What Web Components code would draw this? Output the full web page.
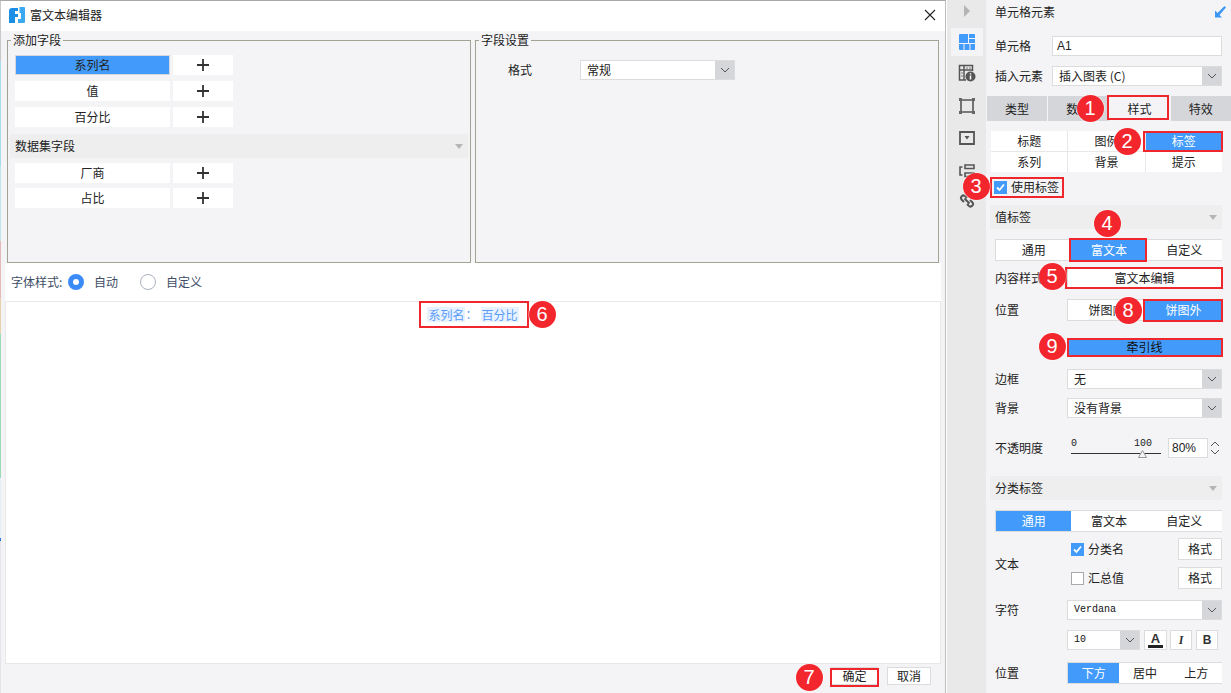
<!DOCTYPE html>
<html lang="zh"><head><meta charset="utf-8"><title>富文本编辑器</title>
<style>
html,body{margin:0;padding:0;width:1231px;height:693px;overflow:hidden;background:#fff}
body{font:12px/18px "Noto Sans CJK SC","Noto Sans",sans-serif;color:#222}
</style></head><body>
<rt-app>
  <rt-dialog heading="富文本编辑器">
    <rt-fieldset slot="left" legend="添加字段" style="width:464px">
      <rt-field selected label="系列名" style="margin-top:6px"></rt-field>
      <rt-field label="值" style="margin-top:6px"></rt-field>
      <rt-field label="百分比" style="margin-top:6px"></rt-field>
      <rt-collapse heading="数据集字段" style="margin:7px 2px 0;height:24px"></rt-collapse>
      <rt-field label="厂商" style="margin-top:5px"></rt-field>
      <rt-field label="占比" style="margin-top:5px"></rt-field>
    </rt-fieldset>
    <rt-fieldset slot="right" legend="字段设置" style="width:464px">
      <rt-row label="格式" lw="72" style="margin:11px 0 0 32px;height:20px">
        <rt-select value="常规" style="width:155px"></rt-select>
      </rt-row>
    </rt-fieldset>
    <rt-radios slot="radios" heading="字体样式:"></rt-radios>
    <rt-editor slot="editor">
      <rt-chip>系列名</rt-chip><span style="color:#5a9cf8;margin-right:3px">：</span><rt-chip>百分比</rt-chip>
    </rt-editor>
    <rt-btn slot="footer" style="width:47px;height:18px;margin-right:9px">确定</rt-btn>
    <rt-btn slot="footer" style="width:44px;height:18px">取消</rt-btn>
  </rt-dialog>
  <rt-rail></rt-rail>
  <rt-panel heading="单元格元素">
    <rt-row label="单元格" lw="57" style="margin:11px 9px 0;height:20px"><rt-input style="flex:1">A1</rt-input></rt-row>
    <rt-row label="插入元素" lw="57" style="margin:10px 9px 0;height:20px"><rt-select value="插入图表 (C)" style="flex:1"></rt-select></rt-row>
    <rt-tabs items="类型,数据,样式,特效" active="2" style="margin-top:10px"></rt-tabs>
    <rt-subtabs items="标题,图例,标签,系列,背景,提示" active="2" style="margin:10px 9px 0 5px"></rt-subtabs>
    <rt-check checked style="margin:6px 0 0 8px;height:18px">使用标签</rt-check>
    <rt-collapse heading="值标签" style="margin:9px 9px 0 4px;height:24px"></rt-collapse>
    <rt-seg items="通用,富文本,自定义" active="1" style="margin:10px 9px 0;height:22px"></rt-seg>
    <rt-row label="内容样式" lw="72" style="margin:6px 9px 0;height:22px"><rt-btn style="flex:1;height:22px">富文本编辑</rt-btn></rt-row>
    <rt-row label="位置" lw="72" style="margin:10px 9px 0;height:22px"><rt-seg items="饼图内,饼图外" active="1" style="flex:1;height:22px"></rt-seg></rt-row>
    <rt-row lw="72" style="margin:17px 9px 0;height:18px"><rt-btn primary style="flex:1;height:18px">牵引线</rt-btn></rt-row>
    <rt-row label="边框" lw="72" style="margin:13px 9px 0;height:20px"><rt-select value="无" style="flex:1"></rt-select></rt-row>
    <rt-row label="背景" lw="72" style="margin:9px 9px 0;height:20px"><rt-select value="没有背景" style="flex:1"></rt-select></rt-row>
    <rt-row label="不透明度" lw="76" style="margin:20px 9px 0;height:20px"><rt-slider style="width:90px;margin-right:7px"></rt-slider><rt-num style="flex:1">80%</rt-num></rt-row>
    <rt-collapse heading="分类标签" style="margin:18px 9px 0 4px;height:24px"></rt-collapse>
    <rt-seg items="通用,富文本,自定义" active="0" style="margin:10px 9px 0;height:22px"></rt-seg>
    <rt-row label="文本" lw="76" style="margin:6px 9px 0;height:51px">
      <rt-stack style="flex:1">
        <rt-row style="height:22px"><rt-check checked style="flex:1">分类名</rt-check><rt-btn style="width:44px;height:22px">格式</rt-btn></rt-row>
        <rt-row style="height:22px;margin-top:7px"><rt-check style="flex:1">汇总值</rt-check><rt-btn style="width:44px;height:22px">格式</rt-btn></rt-row>
      </rt-stack>
    </rt-row>
    <rt-row label="字符" lw="72" style="margin:11px 9px 0;height:20px"><rt-select mono value="Verdana" style="flex:1"></rt-select></rt-row>
    <rt-row lw="72" style="margin:10px 9px 0;height:20px">
      <rt-select mono value="10" style="width:73px;margin-right:4px"></rt-select>
      <rt-tool kind="a" style="margin-right:3px;width:23px"></rt-tool><rt-tool kind="i" style="margin-right:4px"></rt-tool><rt-tool kind="b"></rt-tool>
    </rt-row>
    <rt-row label="位置" lw="72" style="margin:12px 9px 0;height:22px"><rt-seg items="下方,居中,上方" active="0" style="flex:1;height:22px"></rt-seg></rt-row>
  </rt-panel>

  <rt-mark slot="over" style="--x:1107px;--y:95px;--w:62px;--h:25px"></rt-mark>
  <rt-mark slot="over" style="--x:1143px;--y:131px;--w:80px;--h:21px"></rt-mark>
  <rt-mark slot="over" style="--x:990px;--y:177px;--w:74px;--h:21px"></rt-mark>
  <rt-mark slot="over" style="--x:1069px;--y:238px;--w:78px;--h:24px"></rt-mark>
  <rt-mark slot="over" style="--x:1065px;--y:267px;--w:158px;--h:22px"></rt-mark>
  <rt-mark slot="over" style="--x:1143px;--y:299px;--w:80px;--h:23px"></rt-mark>
  <rt-mark slot="over" style="--x:1067px;--y:338px;--w:156px;--h:19px"></rt-mark>
  <rt-mark slot="over" style="--x:419px;--y:301px;--w:110px;--h:27px"></rt-mark>
  <rt-mark slot="over" style="--x:830px;--y:668px;--w:49px;--h:19px"></rt-mark>

  <rt-badge slot="over" style="--x:1090px;--y:108px">1</rt-badge>
  <rt-badge slot="over" style="--x:1127px;--y:141px">2</rt-badge>
  <rt-badge slot="over" style="--x:976px;--y:186px">3</rt-badge>
  <rt-badge slot="over" style="--x:1107px;--y:223px">4</rt-badge>
  <rt-badge slot="over" style="--x:1052px;--y:276px">5</rt-badge>
  <rt-badge slot="over" style="--x:542px;--y:314px">6</rt-badge>
  <rt-badge slot="over" style="--x:809px;--y:677px">7</rt-badge>
  <rt-badge slot="over" style="--x:1128px;--y:310px">8</rt-badge>
  <rt-badge slot="over" style="--x:1052px;--y:346px">9</rt-badge>
</rt-app>
<script>
const BLUE='#429bfb', CHEV='<svg width="10" height="6" viewBox="0 0 10 6"><path d="M1 1l4 4 4-4" fill="none" stroke="#555" stroke-width="1"/></svg>';
function def(name, css, render){
  customElements.define(name, class extends HTMLElement{
    connectedCallback(){
      if(this.shadowRoot) return;
      const r=this.attachShadow({mode:'open'});
      r.innerHTML='<style>'+css+'</style>'+render(this);
    }
  });
}
const a=(e,n,d='')=>e.hasAttribute(n)?e.getAttribute(n):d;

def('rt-app',':host{display:flex;position:relative;width:1231px;height:693px;overflow:hidden}',
  ()=>'<slot></slot><slot name="over"></slot>');

def('rt-dialog',`
  :host{display:flex;flex-direction:column;width:946px;height:693px;box-sizing:border-box;flex:none;background:#f4f4f6;
    border-top:1px solid #a8a8a8;border-right:1px solid #bdbdbd;position:relative;padding-left:1px}
  .edge{position:absolute;left:0;top:0;bottom:0;width:1px;background:linear-gradient(#c8c8c8 0 60px,#a6dcec 60px 165px,#bfe6e6 165px 240px,#e6b8b8 240px 297px,#e6d2aa 297px 333px,#9ddbb8 333px 477px,#e8eef8 477px 537px,#2a7be0 537px 540px,#e4e4e8 540px)}
  .title{height:30px;background:#fff;display:flex;align-items:center;flex:none;box-sizing:border-box;padding-bottom:2px}
  .logo{margin-left:8px;margin-right:5px}
  .name{flex:1}
  .close{margin-right:9px;display:block}
  .sets{display:flex;gap:4px;height:232px;padding:0 6px;flex:none}
  .mid{flex:1;margin:0 4px;background:#fff;display:flex;flex-direction:column;min-height:0}
  .foot{height:29px;display:flex;justify-content:flex-end;align-items:center;padding:0 14px 6px 0;flex:none;box-sizing:border-box}
`,e=>`<div class="edge"></div>
  <div class="title">
    <svg class="logo" width="16" height="16" viewBox="0 0 16 16"><path d="M3 1h6v3H6v3h3v3H6v6H0V4a3 3 0 0 1 3-3z" fill="#1b8fe6"/><path d="M10.500 0H15a1 1 0 0 1 1 1v14a1 1 0 0 1-1 1H9v-4h3V6h-1.500z" fill="#3aa9ef"/></svg>
    <span class="name">${a(e,'heading')}</span>
    <svg class="close" width="12" height="12" viewBox="0 0 12 12"><path d="M1 1l10 10M11 1L1 11" stroke="#222" stroke-width="1.100" fill="none"/></svg>
  </div>
  <div class="sets"><slot name="left"></slot><slot name="right"></slot></div>
  <div class="mid"><slot name="radios"></slot><slot name="editor"></slot></div>
  <div class="foot"><slot name="footer"></slot></div>`);

def('rt-fieldset',`
  :host{display:block;flex:none}
  fieldset{margin:0;padding:0;height:100%;box-sizing:border-box;border:1px solid #a3a394;min-width:0}
  legend{padding:0 2px;margin-left:3px;line-height:18px;color:#222}
`,e=>`<fieldset><legend>${a(e,'legend')}</legend><slot></slot></fieldset>`);

def('rt-field',`
  :host{display:flex;height:20px;margin-left:7px;gap:3px}
  .n{width:155px;background:#fff;text-align:center;line-height:20px;box-sizing:border-box}
  :host([selected]) .n{background:${BLUE};border:1px solid #d4d8de;line-height:18px}
  .p{width:60px;background:#fff;display:flex;align-items:center;justify-content:center}
`,e=>`<div class="n">${a(e,'label')}</div><div class="p"><svg width="12" height="12" viewBox="0 0 12 12"><path d="M6 0v12M0 6h12" stroke="#333" stroke-width="1.800"/></svg></div>`);

def('rt-collapse',`
  :host{display:flex;align-items:center;background:#eee;padding:0 5px;justify-content:space-between;box-sizing:border-box}
  i{width:0;height:0;border:4.500px solid transparent;border-top:5px solid #b5b5b8;border-bottom:0;display:block}
`,e=>`<span>${a(e,'heading')}</span><i></i>`);

def('rt-row',`
  :host{display:flex;align-items:center}
  .l{flex:none;white-space:nowrap}
  .s{display:flex;flex:1;align-items:center;min-width:0}
`,e=>{const w=a(e,'lw');return (w?`<div class="l" style="width:${w}px">${a(e,'label')}</div>`:'')+'<div class="s"><slot></slot></div>'});

def('rt-stack',':host{display:block}',()=>'<slot></slot>');

def('rt-select',`
  :host{display:flex;height:20px;box-sizing:border-box;border:1px solid #dcdcdc;background:#fff;align-items:center;min-width:0}
  .v{flex:1;padding-left:6px;white-space:nowrap;overflow:hidden}
  :host([mono]) .v{font:10px/18px "Liberation Mono",monospace;padding-left:6px;color:#111}
  .c{width:19px;height:100%;background:#d5d6da;display:flex;align-items:center;justify-content:center;flex:none}
`,e=>`<div class="v">${a(e,'value')}</div><div class="c">${CHEV}</div>`);

def('rt-input',`
  :host{display:block;height:20px;box-sizing:border-box;border:1px solid #dcdcdc;background:#fff;padding-left:4px;line-height:18px;font-family:"Liberation Sans",sans-serif}
`,()=>'<slot></slot>');

def('rt-radios',`
  :host{display:flex;align-items:center;height:38px;padding-left:6px;flex:none;color:#3d4d66}
  .o{width:16px;height:16px;border-radius:50%;box-sizing:border-box;flex:none}
  .on{border:5px solid #3b8bf6;background:#fff;margin-left:2px}
  .off{border:1px solid #a9b2bf;background:#fff;margin-left:22px}
  .t{margin-left:10px}
`,e=>`<span style="width:55px;white-space:nowrap">${a(e,'heading')}</span><span class="o on"></span><span class="t">自动</span><span class="o off"></span><span class="t">自定义</span>`);

def('rt-editor',`
  :host{display:block;flex:1;border:1px solid #e8e8e8;background:#fff;min-height:0}
  .l{display:flex;justify-content:center;align-items:center;height:24px}
`,()=>'<div class="l"><slot></slot></div>');

def('rt-chip',`:host{display:inline-block;background:#e8f2ff;color:#5a9cf8;line-height:15px;padding:0 1px}`,()=>'<slot></slot>');

def('rt-btn',`
  :host{display:flex;align-items:center;justify-content:center;box-sizing:border-box;background:#fff;border:1px solid #dcdcdc;flex:none}
  :host([primary]){background:${BLUE};border-color:${BLUE};color:#111}
`,()=>'<slot></slot>');

def('rt-rail',`
  :host{display:flex;flex-direction:column;align-items:center;width:39px;margin-left:1px;height:693px;background:#e9e9e9;flex:none;box-sizing:border-box;padding-top:5px}
  .a{width:0;height:0;border:6px solid transparent;border-left:6px solid #b4b4b4;border-right:0;margin-left:0}
  .sel{width:32px;height:28px;background:#f4f4f6;margin-top:11px;display:flex;align-items:center;justify-content:center}
  svg{display:block}
`,()=>`<div class="a"></div>
  <div class="sel"><svg width="16" height="16" viewBox="0 0 16 16"><path fill="#429bfb" d="M1 0h8v9H0V1a1 1 0 0 1 1-1zM10 0h5a1 1 0 0 1 1 1v3h-6zM10 5h6v4h-6zM0 10h4.500v6H1a1 1 0 0 1-1-1zM5.500 10h5v6h-5zM11.500 10H16v5a1 1 0 0 1-1 1h-3.500z"/></svg></div>
  <svg style="margin-top:8px" width="18" height="18" viewBox="0 0 18 18"><path fill="none" stroke="#555" stroke-width="1.500" d="M8 16H1.500V1.500h13V7M1.500 6h13M6 1.500V16"/><path fill="none" stroke="#777" d="M3 9h2M3 12h2M8 4h2M11 4h2"/><circle cx="12.500" cy="12.500" r="5" fill="#555"/><path stroke="#fff" stroke-width="1.500" d="M12.500 11.500v4M12.500 9.300v1.200"/></svg>
  <svg style="margin-top:16px" width="16" height="16" viewBox="0 0 16 16"><path fill="none" stroke="#555" stroke-width="1.600" d="M2 2h12v12H2z"/><path fill="#666" d="M0 0h3v3H0zM13 0h3v3h-3zM0 13h3v3H0zM13 13h3v3h-3z"/></svg>
  <svg style="margin-top:17px" width="16" height="14" viewBox="0 0 16 14"><path fill="none" stroke="#555" stroke-width="1.800" d="M1 1h14v12H1z"/><path fill="#555" d="M5.500 5h5L8 8.500z"/></svg>
  <svg style="margin-top:19px" width="16" height="14" viewBox="0 0 16 14"><path fill="none" stroke="#555" stroke-width="1.600" d="M6 1h9v3.500H6zM6 9h9v3.500H6zM3.500 3H1v8h2.500"/></svg>
  <svg style="margin-top:15px" width="16" height="16" viewBox="0 0 16 16"><path fill="none" stroke="#555" stroke-width="2" d="M8 5L6 3a2.500 2.500 0 0 0-3.500 3.500L5 9M8 11l2 2a2.500 2.500 0 0 0 3.500-3.500L11 7M5.500 5.500l5 5"/></svg>`);

def('rt-panel',`
  :host{display:flex;flex-direction:column;flex:none;width:245px;height:693px;background:#f4f4f6;box-sizing:border-box}
  .h{height:25px;display:flex;align-items:center;justify-content:space-between;padding:0 5px 2px 9px;flex:none;box-sizing:border-box}
`,e=>`<div class="h"><span>${a(e,'heading')}</span><svg width="12" height="12" viewBox="0 0 12 12"><path fill="#3c97f5" d="M12 1.500L10.500 0 3.500 7 1 4.500V11.500H8L5.500 9z"/></svg></div><slot></slot>`);

def('rt-tabs',`
  :host{display:flex;gap:1px;height:25px;padding-left:1px}
  div{flex:1;background:#d5d6da;display:flex;align-items:center;justify-content:center}
  .on{background:#f4f4f6}
`,e=>a(e,'items').split(',').map((t,i)=>`<div class="${i==a(e,'active')?'on':''}">${t}</div>`).join(''));

def('rt-subtabs',`
  :host{display:grid;grid-template-columns:repeat(3,1fr);gap:1px;background:#e8e8e8}
  div{background:#fff;display:flex;align-items:center;justify-content:center;height:20px}
  .on{background:${BLUE};color:#fff}
`,e=>a(e,'items').split(',').map((t,i)=>`<div class="${i==a(e,'active')?'on':''}">${t}</div>`).join(''));

def('rt-check',`
  :host{display:flex;align-items:center;gap:4px}
  i{width:13px;height:13px;box-sizing:border-box;display:block;border:1px solid #a9a9a9;background:#fff;flex:none}
  :host([checked]) i{background:${BLUE};border:0}
  svg{display:block}
`,e=>`<i>${e.hasAttribute('checked')?'<svg width="13" height="13" viewBox="0 0 13 13"><path d="M3 6.500l2.500 2.500L10 3.500" fill="none" stroke="#fff" stroke-width="1.800"/></svg>':''}</i><slot></slot>`);

def('rt-seg',`
  :host{display:flex;box-sizing:border-box;border:1px solid #dcdcdc;border-right:0;background:#fff}
  div{flex:1;display:flex;align-items:center;justify-content:center;min-width:0}
  .on{background:${BLUE};color:#fff}
`,e=>a(e,'items').split(',').map((t,i)=>`<div class="${i==a(e,'active')?'on':''}">${t}</div>`).join(''));

def('rt-slider',`
  :host{display:block;position:relative;height:20px;font:10px/10px "Liberation Mono",monospace;flex:none}
  .n{display:flex;justify-content:space-between;padding:1px 9px 0 0;height:15px;align-items:flex-start;box-sizing:border-box}
  .t{height:1px;background:#333}
  svg{position:absolute;left:67px;top:12px}
`,()=>`<div class="n"><span>0</span><span>100</span></div><div class="t"></div><svg width="9" height="8" viewBox="0 0 9 8"><path d="M4.500 .5L8.500 7.500H.5z" fill="#f4f4f6" stroke="#999"/></svg>`);

def('rt-num',`
  :host{display:flex;height:20px;min-width:0}
  .v{flex:1;background:#fff;border:1px solid #dcdcdc;display:flex;align-items:center;padding-left:3px;box-sizing:border-box;font-family:"Liberation Sans",sans-serif}
  .s{width:14px;display:flex;flex-direction:column;align-items:center;justify-content:space-between;padding:3px 0;box-sizing:border-box;flex:none}
`,()=>`<div class="v"><slot></slot></div><div class="s"><svg width="10" height="6" viewBox="0 0 10 6"><path d="M1 5l4-4 4 4" fill="none" stroke="#555"/></svg>${CHEV}</div>`);

def('rt-tool',`
  :host{display:flex;width:22px;height:20px;flex:none;background:#fff;border:1px solid #dcdcdc;box-sizing:border-box;align-items:center;justify-content:center;font:bold 12px/14px "Liberation Sans",sans-serif;color:#333;position:relative}
  .u{display:flex;flex-direction:column;align-items:center;line-height:12px;font-size:13px}
  .u b{display:block;width:15px;height:3px;background:#222;margin-top:0}
`,e=>{const k=a(e,'kind');
  if(k=='a')return '<div class="u"><span>A</span><b></b></div>';
  if(k=='i')return '<i style="font-family:\'Liberation Serif\',serif">I</i>';
  return '<span>B</span>'});

def('rt-mark',`:host{display:block;position:absolute;left:var(--x);top:var(--y);width:var(--w);height:var(--h);box-sizing:border-box;border:2px solid #f0262d;pointer-events:none}`,()=>'');

def('rt-badge',`
  :host{display:flex;position:absolute;left:calc(var(--x) - 13.5px);top:calc(var(--y) - 13.5px);width:27px;height:27px;border-radius:50%;background:#f3262e;color:#fff;align-items:center;justify-content:center;font:20px/27px "Liberation Sans",sans-serif;box-shadow:0 0 0 1px rgba(255,255,255,.35)}
`,()=>'<slot></slot>');
</script>
</body></html>
